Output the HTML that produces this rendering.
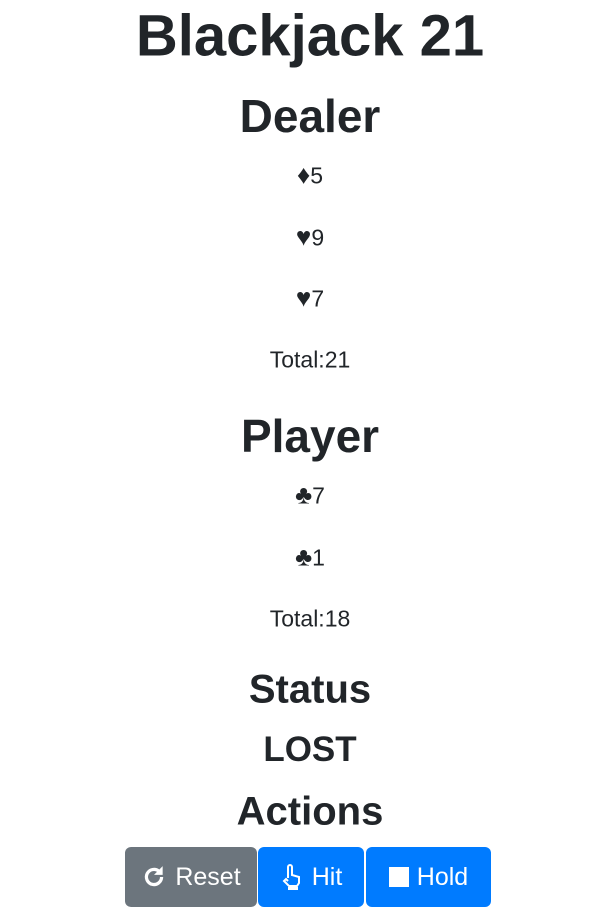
<!DOCTYPE html>
<html><head><meta charset="utf-8"><style>
body{margin:0;width:590px;height:918px;background:#fff;color:#212529;font-family:"Liberation Sans","DejaVu Sans",sans-serif;position:relative;overflow:hidden}
.l{position:absolute;left:15px;width:590px;text-align:center;transform:translateY(-50%);white-space:nowrap}
.h1{font-size:58px;font-weight:bold}
.h2{font-size:46px;font-weight:bold}
.h3{font-size:40px;font-weight:bold}
.h4{font-size:35px;font-weight:bold}
.p{font-size:23px}
.s{font-size:26px}
.b{position:absolute;top:847px;height:60px;border-radius:6px;color:#fff;font-size:25px;display:flex;align-items:center;justify-content:center;gap:8px}
</style></head><body>
<div class="l h1" style="top:36px">Blackjack 21</div>
<div class="l h2" style="top:116px">Dealer</div>
<div class="l p" style="top:175px"><span class="s">♦</span>5</div>
<div class="l p" style="top:237px"><span class="s">♥</span>9</div>
<div class="l p" style="top:298px"><span class="s">♥</span>7</div>
<div class="l p" style="top:360px">Total:21</div>
<div class="l h2" style="top:436px">Player</div>
<div class="l p" style="top:495px"><span class="s">♣</span>7</div>
<div class="l p" style="top:557px"><span class="s">♣</span>1</div>
<div class="l p" style="top:619px">Total:18</div>
<div class="l h3" style="top:690px">Status</div>
<div class="l h4" style="top:750px">LOST</div>
<div class="l h3" style="top:812px">Actions</div>
<div class="b" style="left:125px;width:132px;background:#6c757d"><svg width="26" height="26" viewBox="0 0 24 24"><path d="M19 12a7 7 0 1 1-2.5-5.4" fill="none" stroke="#fff" stroke-width="3"/><path d="M20 2v8h-8z" fill="#fff"/></svg>Reset</div>
<div class="b" style="left:258px;width:106px;background:#007bff"><svg width="24" height="28" viewBox="0 0 24 26"><path d="M8 14V3a2 2 0 0 1 4 0v8l7 2v6l-2 3H9l-5-5 2-2 2 2" fill="none" stroke="#fff" stroke-width="2"/><rect x="8" y="23" width="10" height="3" fill="#fff"/></svg>Hit</div>
<div class="b" style="left:366px;width:125px;background:#007bff"><span style="width:20px;height:20px;background:#fff;display:inline-block"></span>Hold</div>
</body></html>
